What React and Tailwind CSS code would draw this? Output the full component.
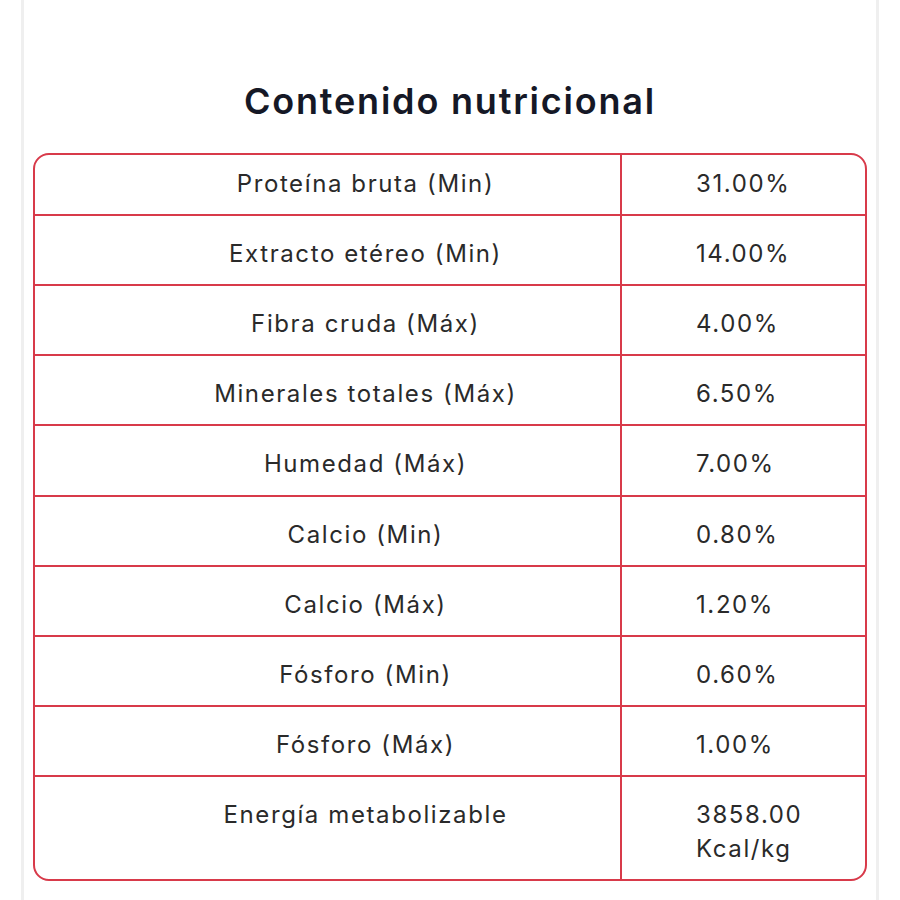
import React from "react";

const rows = [
  ["Proteína bruta (Min)", "31.00%"],
  ["Extracto etéreo (Min)", "14.00%"],
  ["Fibra cruda (Máx)", "4.00%"],
  ["Minerales totales (Máx)", "6.50%"],
  ["Humedad (Máx)", "7.00%"],
  ["Calcio (Min)", "0.80%"],
  ["Calcio (Máx)", "1.20%"],
  ["Fósforo (Min)", "0.60%"],
  ["Fósforo (Máx)", "1.00%"],
  ["Energía metabolizable", "3858.00 Kcal/kg"],
];

export default function App() {
  return (
    <div className="w-[900px] h-[900px] bg-white flex justify-center" style={{ fontFamily: "Inter, 'Noto Sans', sans-serif" }}>
      <div className="w-[858px] h-full border-x-[3px] border-[#efefef] px-[9px]">
        <h1 className="pt-[79px] h-[153px] text-center text-[36px] leading-[44px] font-semibold text-[#151826] tracking-[1.8px]">
          Contenido nutricional
        </h1>
        <div className="border-2 border-[#d83a4a] rounded-[16px] overflow-hidden text-[24px] leading-[34px] text-[#2a2a2a] tracking-[1.6px]">
          {rows.map(([label, value], i) => {
            const pt = i === 0 ? "pt-[12px]" : "pt-[21px]";
            const pb = i === 4 ? "pb-[14px]" : "pb-[13px]";
            return (
              <div
                key={label}
                className={`flex ${i < rows.length - 1 ? "border-b-2 border-[#d83a4a]" : ""}`}
              >
                <div className={`w-[587px] border-r-2 border-[#d83a4a] pl-[76px] text-center ${pt} ${pb}`}>
                  {label}
                </div>
                <div className={`flex-1 pl-[74px] pr-[40px] ${pt} ${pb}`}>
                  {value}
                </div>
              </div>
            );
          })}
        </div>
      </div>
    </div>
  );
}
